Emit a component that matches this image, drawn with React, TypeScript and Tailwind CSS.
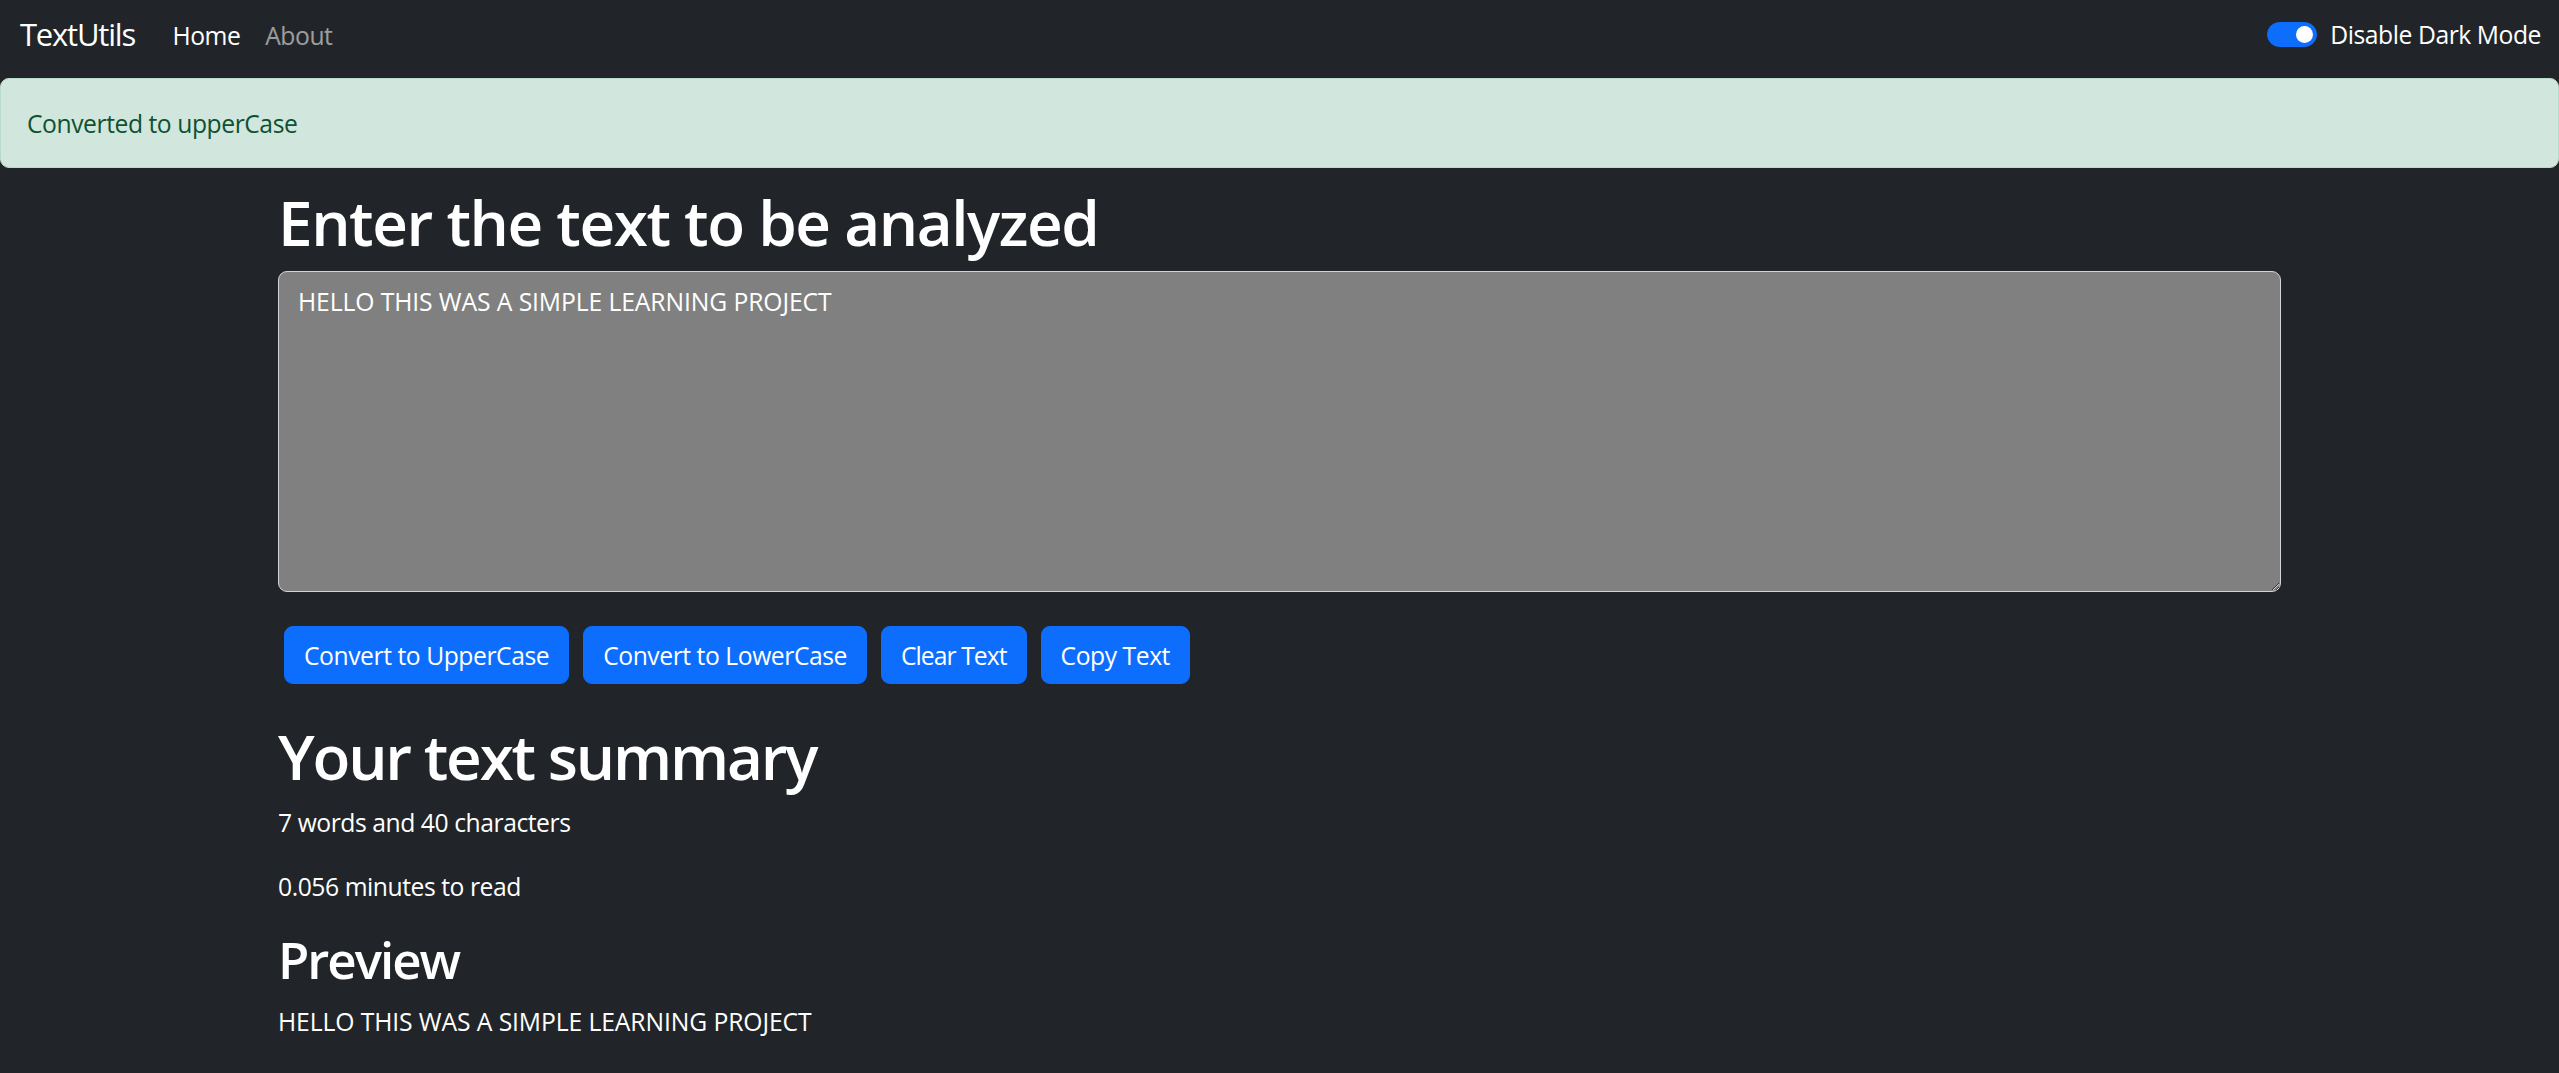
import React from "react";

const FONT = { fontFamily: '"Open Sans", "Noto Sans", "Liberation Sans", sans-serif' };

function Toggle() {
  return (
    <div className="relative h-[25px] w-[50px] rounded-full border border-[#0d6efd] bg-[#0d6efd]">
      <div className="absolute right-[3px] top-[3px] h-[17px] w-[17px] rounded-full bg-white" />
    </div>
  );
}

const BUTTONS: { label: string; cls: string }[] = [
  { label: "Convert to UpperCase", cls: "tracking-[-0.45px]" },
  { label: "Convert to LowerCase", cls: "tracking-[-0.45px]" },
  { label: "Clear Text", cls: "tracking-[-0.95px]" },
  { label: "Copy Text", cls: "tracking-[-0.45px]" },
];

export default function App() {
  const text = "HELLO THIS WAS A SIMPLE LEARNING PROJECT";
  return (
    <div className="min-h-screen bg-[#212529] tracking-[-0.45px] text-white" style={FONT}>
      {/* Navbar */}
      <nav className="flex h-[78px] items-start justify-between pl-[20px] pr-[18px]">
        <div className="flex items-start">
          <a className="mt-[11px] text-[31px] leading-[47px] tracking-[-1.2px] text-white">TextUtils</a>
          <ul className="ml-[25px] mt-[17px] flex text-[24.7px] leading-[37px]">
            <li className="px-[12.4px] text-white">Home</li>
            <li className="px-[12.4px] text-white/55">About</li>
          </ul>
        </div>
        <div className="mt-[16px] flex items-center gap-[13px]">
          <Toggle />
          <span className="text-[24.7px] leading-[37px] text-white">Disable Dark Mode</span>
        </div>
      </nav>

      {/* Alert */}
      <div className="h-[90px] rounded-[9px] border border-[#badbcc] bg-[#d1e7dd] px-[26px] pt-[26px] text-[24.7px] leading-[37px] text-[#0f5132]">
        Converted to upperCase
      </div>

      {/* Main */}
      <div className="mx-auto w-[2003px]">
        <h1 className="mt-[16.7px] text-[62px] font-semibold leading-[74.4px] tracking-[-1.45px]">
          Enter the text to be analyzed
        </h1>
        <textarea
          className="mt-[12px] block h-[321px] w-full rounded-[9px] border border-[#ced4da] bg-[#808080] px-[19px] py-[10.5px] text-[24.7px] leading-[37px] tracking-[-0.1px] text-white outline-none"
          value={text}
          onChange={() => {}}
          rows={8}
        />
        <div className="mt-[34px] flex gap-[14px] pl-[6px]">
          {BUTTONS.map((b) => (
            <button
              key={b.label}
              className={`flex h-[58px] items-center rounded-[9px] border border-[#0d6efd] bg-[#0d6efd] px-[19px] text-[24.7px] leading-[37px] text-white ${b.cls}`}
            >
              {b.label}
            </button>
          ))}
        </div>
        <h2 className="mt-[34.7px] text-[62px] font-semibold leading-[74.4px] tracking-[-2.2px]">Your text summary</h2>
        <p className="mt-[10.8px] text-[24.7px] leading-[37px]">7 words and 40 characters</p>
        <p className="mt-[27px] text-[24.7px] leading-[37px]">0.056 minutes to read</p>
        <h2 className="mt-[24px] text-[51px] font-semibold leading-[61.2px] tracking-[-2px]">Preview</h2>
        <p className="mt-[13px] text-[24.7px] leading-[37px] tracking-[-0.1px]">{text}</p>
      </div>
    </div>
  );
}
